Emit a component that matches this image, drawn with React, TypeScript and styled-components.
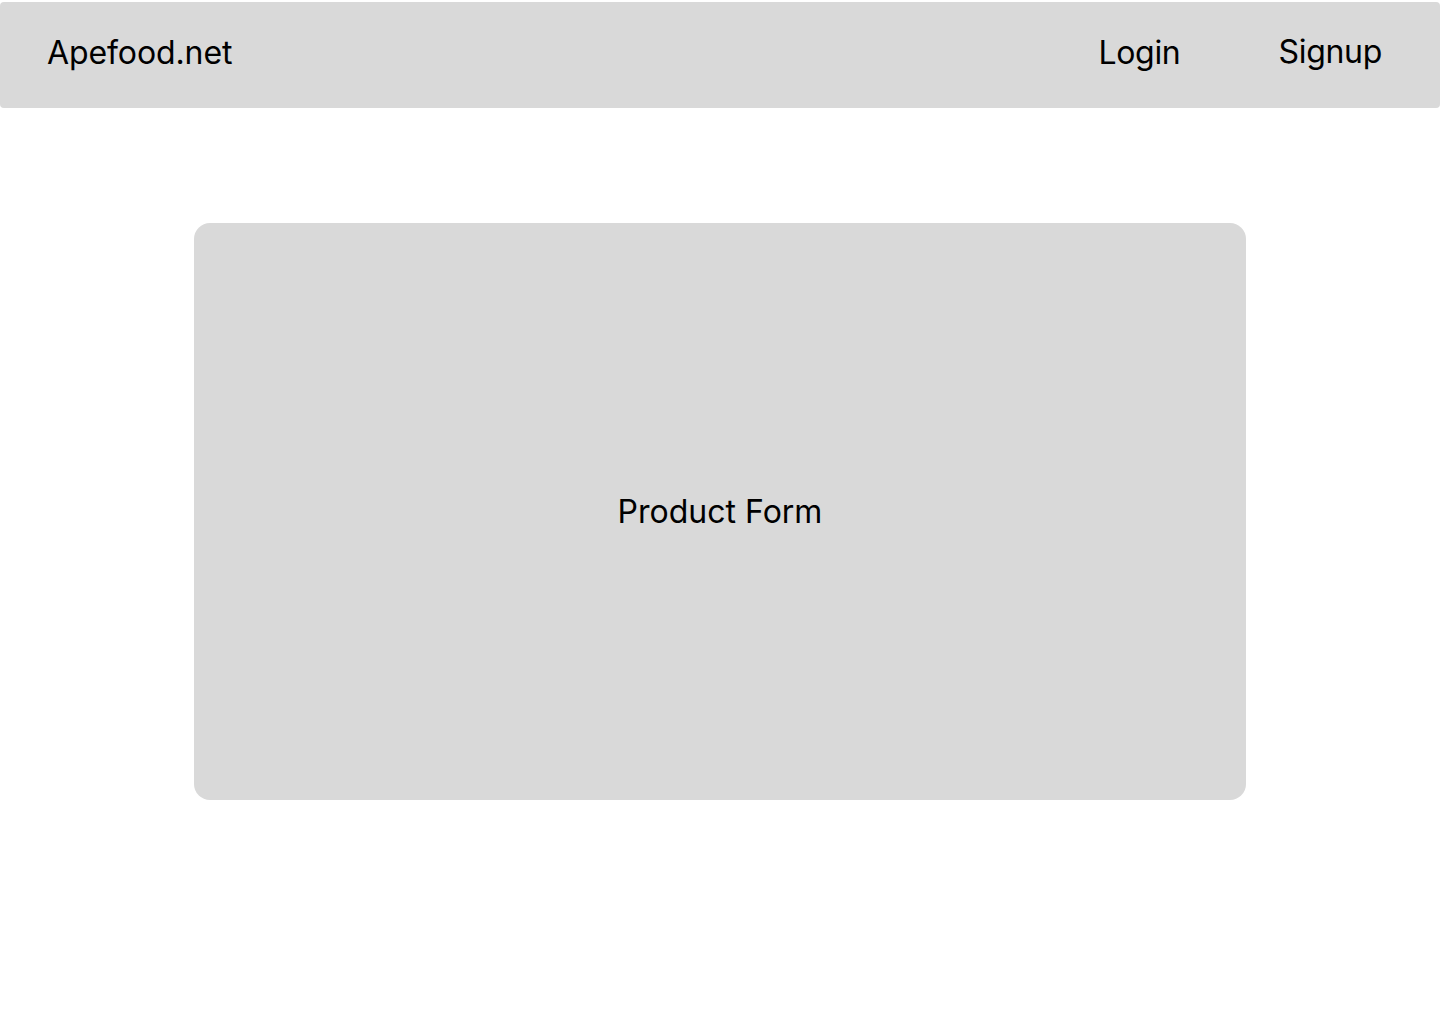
import styled, { createGlobalStyle } from 'styled-components';

const GlobalStyle = createGlobalStyle`
  html, body {
    margin: 0;
    padding: 0;
    background: #ffffff;
  }
  body {
    font-family: Inter, 'Noto Sans', sans-serif;
    color: #000000;
  }
`;

const Page = styled.div`
  display: flex;
  flex-direction: column;
  align-items: center;
  min-height: 1024px;
  padding-top: 2px;
  box-sizing: border-box;
`;

const Header = styled.header`
  width: 100%;
  height: 106px;
  background: #d9d9d9;
  border-radius: 4px;
  display: flex;
  align-items: center;
  justify-content: space-between;
  padding: 0 58px 5px 47px;
  box-sizing: border-box;
`;

const Logo = styled.div`
  font-size: 32px;
  line-height: 1;
  font-weight: 400;
  letter-spacing: -0.1px;
`;

const Nav = styled.nav`
  display: flex;
  align-items: center;
  gap: 98px;
`;

const NavLink = styled.a<{ $lift?: number }>`
  font-size: 32px;
  line-height: 1;
  letter-spacing: -0.3px;
  color: #000;
  text-decoration: none;
  cursor: pointer;
  position: relative;
  top: ${(p) => (p.$lift ? -p.$lift : 0)}px;
`;

const Card = styled.section`
  margin-top: 115px;
  width: 1052px;
  height: 577px;
  background: #d9d9d9;
  border-radius: 16px;
  display: flex;
  align-items: center;
  justify-content: center;
`;

const CardTitle = styled.h2`
  margin: 0;
  font-size: 32px;
  line-height: 1;
  font-weight: 400;
`;

export default function App() {
  return (
    <>
      <GlobalStyle />
      <Page>
        <Header>
          <Logo>Apefood.net</Logo>
          <Nav>
            <NavLink>Login</NavLink>
            <NavLink $lift={1}>Signup</NavLink>
          </Nav>
        </Header>
        <Card>
          <CardTitle>Product Form</CardTitle>
        </Card>
      </Page>
    </>
  );
}
